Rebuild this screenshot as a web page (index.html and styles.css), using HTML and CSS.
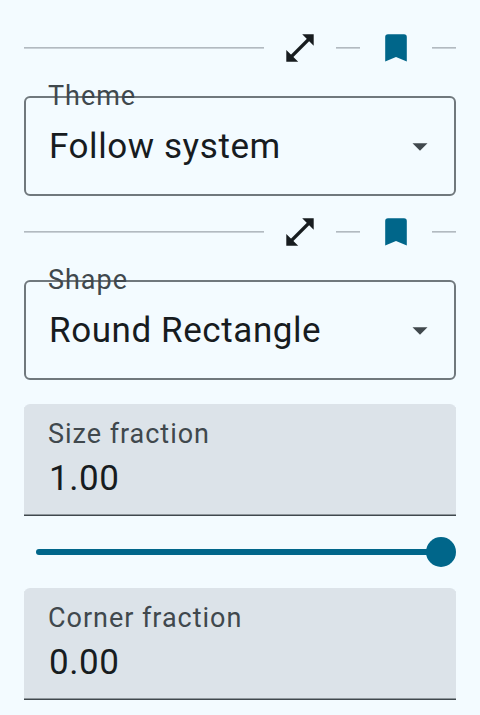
FILE: index.html
```html
<!DOCTYPE html>
<html lang="en">
<head>
<meta charset="utf-8">
<title>Settings</title>
<link rel="stylesheet" href="styles.css">
</head>
<body>
<main class="panel">
  <div class="toolbar">
    <span class="rule rule-long"></span>
    <svg class="icon" viewBox="0 0 48 48"><path class="ink" d="M26.2 10.2H37.7V21.7ZM10.3 37.7V25.9L22.2 37.7Z"/><path class="stroke" d="M15.5 32.5L32.5 15.5"/></svg>
    <span class="rule"></span>
    <svg class="icon" viewBox="0 0 48 48"><path class="accent" d="M13.2 37.5V13Q13.2 10.3 16 10.3H32Q34.8 10.3 34.8 13V37.5L24 33Z"/></svg>
    <span class="rule"></span>
  </div>
  <div class="select">
    <span class="label select-label">Theme</span>
    <span class="value">Follow system</span>
    <svg class="caret" viewBox="0 0 16 8"><path d="M.5 .3H15.5L8 7.8Z"/></svg>
  </div>
  <div class="toolbar">
    <span class="rule rule-long"></span>
    <svg class="icon" viewBox="0 0 48 48"><path class="ink" d="M26.2 10.2H37.7V21.7ZM10.3 37.7V25.9L22.2 37.7Z"/><path class="stroke" d="M15.5 32.5L32.5 15.5"/></svg>
    <span class="rule"></span>
    <svg class="icon" viewBox="0 0 48 48"><path class="accent" d="M13.2 37.5V13Q13.2 10.3 16 10.3H32Q34.8 10.3 34.8 13V37.5L24 33Z"/></svg>
    <span class="rule"></span>
  </div>
  <div class="select">
    <span class="label select-label">Shape</span>
    <span class="value">Round Rectangle</span>
    <svg class="caret" viewBox="0 0 16 8"><path d="M.5 .3H15.5L8 7.8Z"/></svg>
  </div>
  <div class="field field-first">
    <span class="label">Size fraction</span>
    <span class="value">1.00</span>
  </div>
  <div class="slider"><span class="track"></span><span class="thumb"></span></div>
  <div class="field">
    <span class="label">Corner fraction</span>
    <span class="value">0.00</span>
  </div>
</main>
</body>
</html>
```
FILE: styles.css
```css
* { box-sizing: border-box; }

body {
  margin: 0;
  height: 715px;
  overflow: hidden;
  background: #f3fbff;
  color: #171c1f;
  font-family: Roboto, sans-serif;
}

.panel { padding: 12px 24px 0; }

.toolbar {
  display: flex;
  align-items: center;
  height: 72px;
  gap: 12px;
}

.rule {
  width: 24px;
  height: 2px;
  background: linear-gradient(#b2bac0 50%, #c9d1d7 50%);
}

.rule-long { flex: 1; }

.icon { width: 48px; height: 48px; }
.ink { fill: #171c1f; }
.stroke { stroke: #171c1f; stroke-width: 3.2; }
.accent { fill: #00668a; }

.select {
  position: relative;
  display: flex;
  align-items: center;
  justify-content: space-between;
  height: 100px;
  margin-top: 12px;
  padding: 1px 26px 0 23px;
  border: 2px solid #70787d;
  border-radius: 6px;
}

.label {
  color: #40484d;
  font-size: 27px;
  line-height: 36px;
  letter-spacing: 0.97px;
  white-space: nowrap;
}

.select-label { position: absolute; left: 22px; top: -20px; }

.value {
  font-size: 35px;
  line-height: 50px;
  letter-spacing: 0.58px;
  white-space: nowrap;
}

.caret { width: 16px; height: 8px; fill: #40484d; }

.field {
  display: flex;
  flex-direction: column;
  height: 112px;
  padding: 12px 24px 0;
  background: #dce3e9;
  border-bottom: 1px solid #40484d;
  box-shadow: inset 0 -1px #8e969b;
  border-radius: 6px 6px 0 0;
}

.field .value { padding: 2px 0 0 1px; }

.field-first { margin-top: 24px; }

.slider {
  display: flex;
  align-items: center;
  height: 72px;
  padding-left: 12px;
}

.track {
  flex: 1;
  height: 6px;
  margin-right: -4px;
  border-radius: 3px;
  background: #00668a;
}

.thumb {
  width: 30px;
  height: 30px;
  border-radius: 50%;
  background: #00668a;
}
```
